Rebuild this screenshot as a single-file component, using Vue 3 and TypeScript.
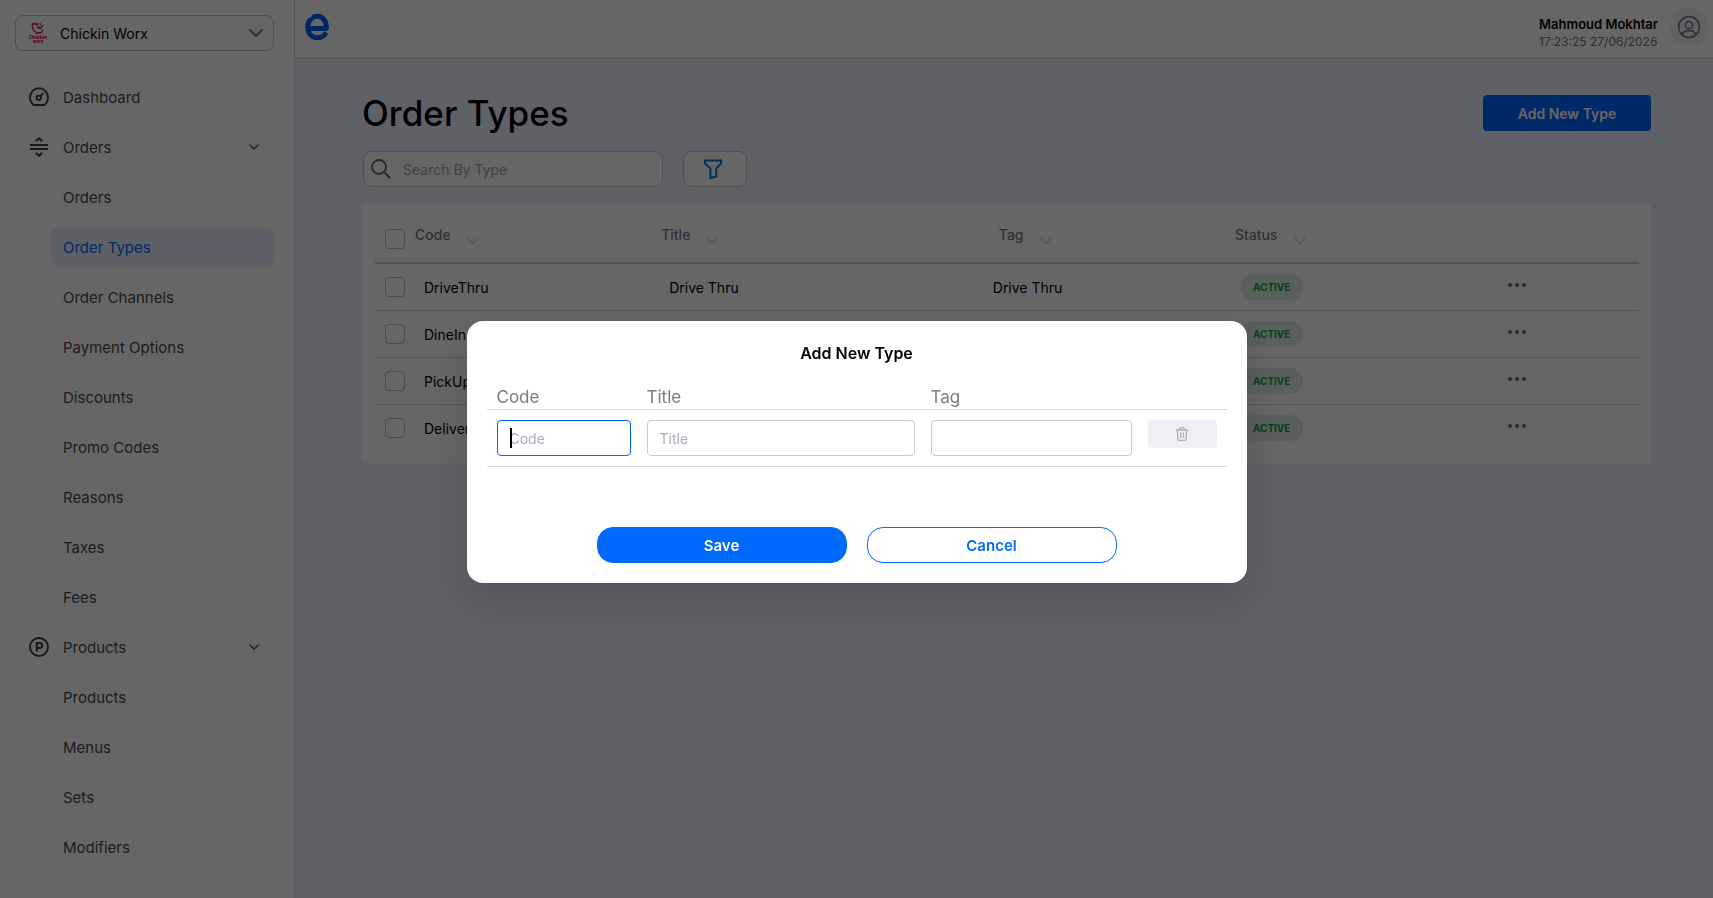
<script setup lang="ts">
import { onMounted, ref } from 'vue'

interface MenuGroup {
  label: string
  icon: 'orders' | 'products'
  items: string[]
}

interface OrderType {
  code: string
  title: string
  tag: string
}

const groups: MenuGroup[] = [
  {
    label: 'Orders',
    icon: 'orders',
    items: [
      'Orders',
      'Order Types',
      'Order Channels',
      'Payment Options',
      'Discounts',
      'Promo Codes',
      'Reasons',
      'Taxes',
      'Fees',
    ],
  },
  { label: 'Products', icon: 'products', items: ['Products', 'Menus', 'Sets', 'Modifiers'] },
]

const activeItem = 'Order Types'

const headings = [
  { key: 'code', label: 'Code' },
  { key: 'title', label: 'Title' },
  { key: 'tag', label: 'Tag' },
  { key: 'status', label: 'Status' },
]

const orderTypes: OrderType[] = [
  { code: 'DriveThru', title: 'Drive Thru', tag: 'Drive Thru' },
  { code: 'DineIn', title: 'Dine In', tag: 'Dine In' },
  { code: 'PickUp', title: 'Pick Up', tag: 'Pick Up' },
  { code: 'Delivery', title: 'Delivery', tag: 'Delivery' },
]

const search = ref('')
const newCode = ref('')
const newTitle = ref('')
const newTag = ref('')
const codeInput = ref<HTMLInputElement | null>(null)

onMounted(() => codeInput.value?.focus())
</script>

<template>
  <div class="app">
    <aside class="sidebar">
      <div class="store">
        <svg class="store-logo" viewBox="0 0 18 22" aria-hidden="true">
          <path
            d="M4.4 1.6C2.8 2.6 3 4.8 4 5.6C3.4 7.6 5 9.2 6.6 9.6M4.6 1.4L6.2 2.4L8 1.6L8.8 3.4M6.6 9.6C6.4 11.2 9 11.8 10 10.6C12.2 11.2 14 10 13.4 8.2M8.4 5.6C9.2 4.6 10.8 5.2 10.4 6.6C12 7 12.6 5.6 12.2 4.4M11 1.4L11.4 2.6M13.8 3.2L12.8 4"
            fill="none"
            stroke="#d8132f"
            stroke-width="1.3"
            stroke-linecap="round"
          />
          <text x="9" y="17" text-anchor="middle" font-size="5" font-weight="800" fill="#d8132f">Chickin</text>
          <text x="9" y="21" text-anchor="middle" font-size="4" font-weight="800" fill="#d8132f">Worx</text>
        </svg>
        <select class="store-select" aria-label="Store">
          <option>Chickin Worx</option>
        </select>
        <svg class="store-chevron" viewBox="0 0 14 8" aria-hidden="true">
          <path d="M1 1L7 7L13 1" fill="none" stroke="#777" stroke-width="2" stroke-linecap="round" stroke-linejoin="round" />
        </svg>
      </div>

      <nav class="menu" aria-label="Main">
        <a class="menu-row" href="#dashboard">
          <svg class="menu-icon" viewBox="0 0 20 20" aria-hidden="true">
            <path
              d="M4.6 18C2.3 16.2 1 13.6 1 10.6C1 5.4 5 1.2 10 1.2S19 5.4 19 10.6C19 13.6 17.7 16.2 15.4 18Z"
              fill="none" stroke="#3c3c3c" stroke-width="1.9" stroke-linejoin="round"
            />
            <circle cx="9.8" cy="10.8" r="2.2" fill="none" stroke="#3c3c3c" stroke-width="1.9" />
            <path d="M11.5 9.1L14.2 6.2" stroke="#3c3c3c" stroke-width="1.9" />
          </svg>
          <span>Dashboard</span>
        </a>

        <template v-for="group in groups" :key="group.label">
          <button class="menu-row" type="button" aria-expanded="true">
            <svg v-if="group.icon === 'orders'" class="menu-icon" viewBox="0 0 20 20" aria-hidden="true">
              <path
                d="M1 8H19M1 12H19M6.8 4.2L10 1.2L13.2 4.2M6.8 15.8L10 18.8L13.2 15.8"
                fill="none" stroke="#3c3c3c" stroke-width="2"
              />
            </svg>
            <svg v-else class="menu-icon" viewBox="0 0 20 20" aria-hidden="true">
              <circle cx="10" cy="10" r="9" fill="none" stroke="#3c3c3c" stroke-width="1.9" />
              <path
                d="M7.8 14.6V6H10.6C14 6 14 11 10.6 11H7.8"
                fill="none" stroke="#3c3c3c" stroke-width="2"
              />
            </svg>
            <span>{{ group.label }}</span>
            <svg class="menu-chevron" viewBox="0 0 10 6" aria-hidden="true">
              <path d="M1 1L5 5L9 1" fill="none" stroke="#444" stroke-width="1.2" stroke-linecap="round" stroke-linejoin="round" />
            </svg>
          </button>
          <a
            v-for="item in group.items"
            :key="item"
            class="menu-sub"
            :class="{ active: item === activeItem }"
            href="#"
          >{{ item }}</a>
        </template>
      </nav>
    </aside>

    <div class="page">
      <header class="topbar">
        <svg class="brand" viewBox="0 0 24 28" role="img" aria-label="Brand">
          <path
            d="M3 15.4H21.4C21.6 8 17.8 3.2 12.4 3.2C6.8 3.2 2.8 7.8 2.8 14.2C2.8 20.6 6.8 24.8 12.6 24.8C16.6 24.8 19.4 23 21.2 19.4"
            fill="none" stroke="#0063f5" stroke-width="5" stroke-linejoin="round"
          />
          <path d="M0 0H8.4L6 4.2L2.6 5.6L1 8.4L0 8Z" fill="#fff" />
        </svg>
        <div class="user">
          <div class="user-text">
            <strong>Mahmoud Mokhtar</strong>
            <time>17:23:25 27/06/2026</time>
          </div>
          <button class="avatar" type="button" aria-label="Account">
            <svg viewBox="0 0 24 24" aria-hidden="true">
              <g fill="none" stroke="#6f7584" stroke-width="1.5">
                <circle cx="12" cy="12" r="10.4" />
                <circle cx="12" cy="10" r="3.6" />
                <path d="M5.2 19.6C6 16.6 8.6 15.4 12 15.4S18 16.6 18.8 19.6" />
              </g>
            </svg>
          </button>
        </div>
      </header>

      <main class="content">
        <div class="title-bar">
          <h1>Order Types</h1>
          <button class="add-button" type="button">Add New Type</button>
        </div>

        <div class="filters">
          <label class="search">
            <svg viewBox="0 0 20 20" aria-hidden="true">
              <circle cx="8" cy="8" r="7" fill="none" stroke="#5f646c" stroke-width="1.8" />
              <path d="M13 13L19.2 19.2" stroke="#5f646c" stroke-width="2" />
            </svg>
            <input v-model="search" type="text" placeholder="Search By Type" aria-label="Search by type" />
          </label>
          <button class="filter-button" type="button" aria-label="Filter">
            <svg viewBox="0 0 18 20" aria-hidden="true">
              <path
                d="M1 1.6H17V4.4L12.2 9.6V17.4L6.4 19V9.6L1 4.4Z"
                fill="none" stroke="#0078d4" stroke-width="2"
              />
            </svg>
          </button>
        </div>

        <section class="card">
          <table class="types">
            <colgroup>
              <col class="w-check" /><col class="w-code" /><col class="w-title" />
              <col class="w-tag" /><col class="w-status" /><col class="w-menu" />
            </colgroup>
            <thead>
              <tr>
                <th><input type="checkbox" aria-label="Select all" /></th>
                <th v-for="h in headings" :key="h.key" :class="h.key" scope="col">
                  <span class="heading">
                    {{ h.label }}
                    <svg viewBox="0 0 12 8" aria-hidden="true">
                      <path d="M1 1L6 6.6L11 1" fill="none" stroke="#d3d5d8" stroke-width="1.3" stroke-linecap="round" stroke-linejoin="round" />
                    </svg>
                  </span>
                </th>
                <th></th>
              </tr>
            </thead>
            <tbody>
              <tr v-for="row in orderTypes" :key="row.code">
                <td><input type="checkbox" :aria-label="`Select ${row.code}`" /></td>
                <td class="code">{{ row.code }}</td>
                <td class="title">{{ row.title }}</td>
                <td class="tag">{{ row.tag }}</td>
                <td class="status"><span class="badge">ACTIVE</span></td>
                <td>
                  <button class="more" type="button" :aria-label="`Actions for ${row.code}`">
                    <svg viewBox="0 0 20 4" aria-hidden="true">
                      <g fill="#6b6f76">
                        <circle cx="3" cy="2" r="2" /><circle cx="10" cy="2" r="2" /><circle cx="17" cy="2" r="2" />
                      </g>
                    </svg>
                  </button>
                </td>
              </tr>
            </tbody>
          </table>
        </section>
      </main>
    </div>

    <div class="overlay">
      <section class="dialog" role="dialog" aria-modal="true" aria-labelledby="dialog-title">
        <h2 id="dialog-title">Add New Type</h2>
        <table class="entry">
          <colgroup>
            <col class="e-code" /><col class="e-title" /><col class="e-tag" /><col class="e-remove" />
          </colgroup>
          <thead>
            <tr>
              <th><label for="new-code">Code</label></th>
              <th><label for="new-title">Title</label></th>
              <th><label for="new-tag">Tag</label></th>
              <th></th>
            </tr>
          </thead>
          <tbody>
            <tr>
              <td>
                <div class="field">
                  <input id="new-code" ref="codeInput" v-model="newCode" class="current" type="text" placeholder="Code" />
                  <span class="caret" aria-hidden="true"></span>
                </div>
              </td>
              <td><input id="new-title" v-model="newTitle" type="text" placeholder="Title" /></td>
              <td><input id="new-tag" v-model="newTag" type="text" /></td>
              <td>
                <button class="remove" type="button" aria-label="Remove row">
                  <svg viewBox="0 0 12 14" aria-hidden="true">
                    <path
                      d="M0 3H12M3.8 3V1.6C3.8 1 4.2 .7 4.8 .7H7.2C7.8 .7 8.2 1 8.2 1.6V3M1.3 3L2 12.2C2 13 2.5 13.4 3.2 13.4H8.8C9.5 13.4 10 13 10 12.2L10.7 3M4.7 5.4V11M7.3 5.4V11"
                      fill="none" stroke="#a9b1b9" stroke-width="1.3"
                    />
                  </svg>
                </button>
              </td>
            </tr>
          </tbody>
        </table>
        <div class="actions">
          <button class="save" type="button">Save</button>
          <button class="cancel" type="button">Cancel</button>
        </div>
      </section>
    </div>
  </div>
</template>

<style>
body {
  margin: 0;
}
</style>

<style scoped>
* {
  box-sizing: border-box;
}

.app {
  display: flex;
  height: 100vh;
  overflow: hidden;
  font-family: Inter, "Liberation Sans", sans-serif;
  font-size: 14px;
  color: #000;
}

button,
input,
select {
  font: inherit;
  margin: 0;
}

button {
  cursor: pointer;
}

svg {
  display: block;
  flex: none;
}

/* Sidebar */
.sidebar {
  flex: 0 0 295px;
  padding: 15px 20px 0 15px;
  background: #fff;
  border-right: 1px solid #cdd4da;
  overflow: hidden;
}

.store {
  position: relative;
  display: flex;
  align-items: center;
  height: 36px;
}

.store-select {
  width: 100%;
  height: 36px;
  padding: 0 36px 0 44px;
  border: 1px solid #c3c6c9;
  border-radius: 8px;
  background: transparent;
  color: #000;
  appearance: none;
}

.store-logo {
  position: absolute;
  left: 14px;
  width: 18px;
  height: 22px;
}

.store-chevron {
  position: absolute;
  right: 11px;
  width: 14px;
  height: 8px;
}

.menu {
  display: flex;
  flex-direction: column;
  gap: 10px;
  margin-top: 26px;
  font-size: 15px;
}

.menu-row,
.menu-sub {
  flex: none;
  display: flex;
  align-items: center;
  height: 40px;
  border: 0;
  border-radius: 8px;
  background: none;
  color: #4a4a4a;
  text-decoration: none;
}

.menu-row {
  gap: 14px;
  padding: 0 15px 0 14px;
}

.menu-icon {
  width: 20px;
  height: 20px;
}

.menu-chevron {
  width: 10px;
  height: 6px;
  margin-left: auto;
}

.menu-sub {
  margin-left: 36px;
  padding-left: 12px;
}

.menu-sub.active {
  background: #e8f0ff;
  color: #0067f5;
}

/* Page */
.page {
  flex: 1;
  min-width: 0;
  background: #ebf3ff;
}

.topbar {
  display: flex;
  align-items: center;
  justify-content: space-between;
  height: 59px;
  padding: 0 5px 4px 10px;
  background: #fff;
  border-bottom: 1px solid #cdd4da;
}

.brand {
  width: 24px;
  height: 28px;
}

.user {
  display: flex;
  align-items: center;
  gap: 12px;
}

.user-text {
  display: flex;
  flex-direction: column;
  margin-top: 12px;
  font-size: 12px;
  line-height: 17px;
}

.user-text strong {
  font-size: 13px;
  font-weight: 600;
}

.user-text time {
  color: #6f747c;
}

.avatar {
  display: grid;
  place-items: center;
  width: 38px;
  height: 38px;
  padding: 0;
  border: 0;
  border-radius: 50%;
  background: #f0f3f4;
}

.avatar svg {
  width: 24px;
  height: 24px;
}

.content {
  padding: 32px 62px 0 67px;
}

.title-bar {
  display: flex;
  align-items: center;
  justify-content: space-between;
  height: 44px;
}

h1 {
  margin: 0;
  font-size: 35px;
  font-weight: 500;
  line-height: 44px;
}

.add-button {
  width: 168px;
  height: 36px;
  border: 0;
  border-radius: 4px;
  background: #006aff;
  color: #fff;
  font-weight: 600;
}

.filters {
  display: flex;
  gap: 20px;
  margin: 16px 1px;
}

.search {
  display: flex;
  align-items: center;
  gap: 12px;
  width: 300px;
  height: 36px;
  padding: 0 7px;
  border: 1px solid #c5cbd2;
  border-radius: 8px;
  background: #fff;
}

.search svg {
  width: 20px;
  height: 20px;
}

.search input {
  flex: 1;
  min-width: 0;
  padding: 0;
  border: 0;
  outline: 0;
  background: none;
}

.search input::placeholder {
  color: #9da3aa;
}

.filter-button {
  display: grid;
  place-items: center;
  width: 64px;
  height: 36px;
  padding: 0 4px 0 0;
  border: 1px solid #c5cbd2;
  border-radius: 8px;
  background: #fff;
}

.filter-button svg {
  width: 18px;
  height: 20px;
}

.card {
  padding: 12px 12px 12px 13px;
  border-radius: 4px;
  background: #fff;
}

table {
  width: 100%;
  table-layout: fixed;
  border-collapse: separate;
  border-spacing: 0;
}

th,
td {
  padding: 0;
  text-align: left;
}

.w-check { width: 40px; }
.w-code { width: 19%; }
.w-title { width: 26%; }
.w-tag { width: 19%; }
.w-status { width: 22%; }

.types th {
  height: 49px;
  border-bottom: 2px solid #c9d3d3;
}

.types td {
  height: 47px;
  border-bottom: 1px solid #cfd2d5;
}

.types tr:last-child td {
  height: 46px;
  border-bottom: 0;
}

.types th:first-child,
.types td:first-child {
  padding-left: 10px;
}

td.code { padding-left: 9px; }
th.title { padding-left: 6px; }
td.title { padding-left: 14px; }
th.tag { padding-left: 15px; }
td.tag { padding-left: 9px; }
th.status { padding-left: 11px; }
td.status { padding-left: 16px; }
.types td:last-child { padding-left: 5px; }

.heading {
  display: flex;
  align-items: flex-end;
  gap: 16px;
  height: 20px;
  margin-bottom: 8px;
  line-height: 20px;
  font-weight: 500;
  color: #757b84;
}

.heading svg {
  width: 12px;
  height: 8px;
}

input[type='checkbox'] {
  display: block;
  width: 20px;
  height: 20px;
  border: 1px solid #b9bfc5;
  border-radius: 4px;
  background: #fff;
  appearance: none;
}

.badge {
  display: inline-block;
  padding: 0 13px;
  border-radius: 13px;
  background: #dff0e6;
  color: #0aa04b;
  font-size: 10px;
  font-weight: 700;
  line-height: 26px;
}

.more {
  display: block;
  margin-bottom: 4px;
  padding: 4px 0;
  border: 0;
  background: none;
}

.more svg {
  width: 20px;
  height: 4px;
}

/* Dialog */
.overlay {
  position: fixed;
  inset: 0;
  display: grid;
  place-items: center;
  padding-top: 6px;
  background: rgba(0, 0, 0, 0.6);
}

.dialog {
  width: 780px;
  max-width: 100%;
  padding: 20px;
  border-radius: 16px;
  background: #fff;
  box-shadow: 0 16px 40px rgba(0, 0, 0, 0.16);
}

h2 {
  margin: 0 0 20px;
  font-size: 16px;
  font-weight: 600;
  line-height: 24px;
  text-align: center;
}

.e-code { width: 152px; }
.e-title { width: 284px; }
.e-tag { width: 217px; }

.entry th,
.entry td {
  padding: 0 8px;
  border-bottom: 1px solid #d5dbdf;
  vertical-align: top;
}

.entry th {
  height: 25px;
  font-size: 17px;
  font-weight: 400;
  line-height: 24px;
  color: #7b7b7b;
}

.entry td {
  height: 57px;
  padding-top: 10px;
}

.entry th:first-child,
.entry td:first-child {
  padding-left: 10px;
}

.entry th:last-child,
.entry td:last-child {
  padding-right: 10px;
}

.field {
  position: relative;
}

.entry input {
  display: block;
  width: 100%;
  height: 36px;
  padding: 0 12px;
  border: 1px solid #c3cad1;
  border-radius: 4px;
  outline: 0;
  background: #fff;
}

.entry input::placeholder {
  color: #a3afba;
}

.entry input.current {
  border-color: #006aff;
  caret-color: transparent;
}

.caret {
  position: absolute;
  top: 8px;
  left: 13px;
  width: 2px;
  height: 20px;
  background: #000;
}

.remove {
  display: grid;
  place-items: center;
  width: 100%;
  height: 28px;
  padding: 0;
  border: 0;
  border-radius: 4px;
  background: #ecf0f4;
}

.remove svg {
  width: 12px;
  height: 14px;
}

.actions {
  display: flex;
  justify-content: center;
  gap: 20px;
  margin-top: 60px;
}

.save,
.cancel {
  width: 250px;
  height: 36px;
  border: 1px solid #006aff;
  border-radius: 16px;
  font-size: 15px;
  font-weight: 600;
}

.save {
  background: #006aff;
  color: #fff;
}

.cancel {
  background: #fff;
  color: #006aff;
}
</style>
